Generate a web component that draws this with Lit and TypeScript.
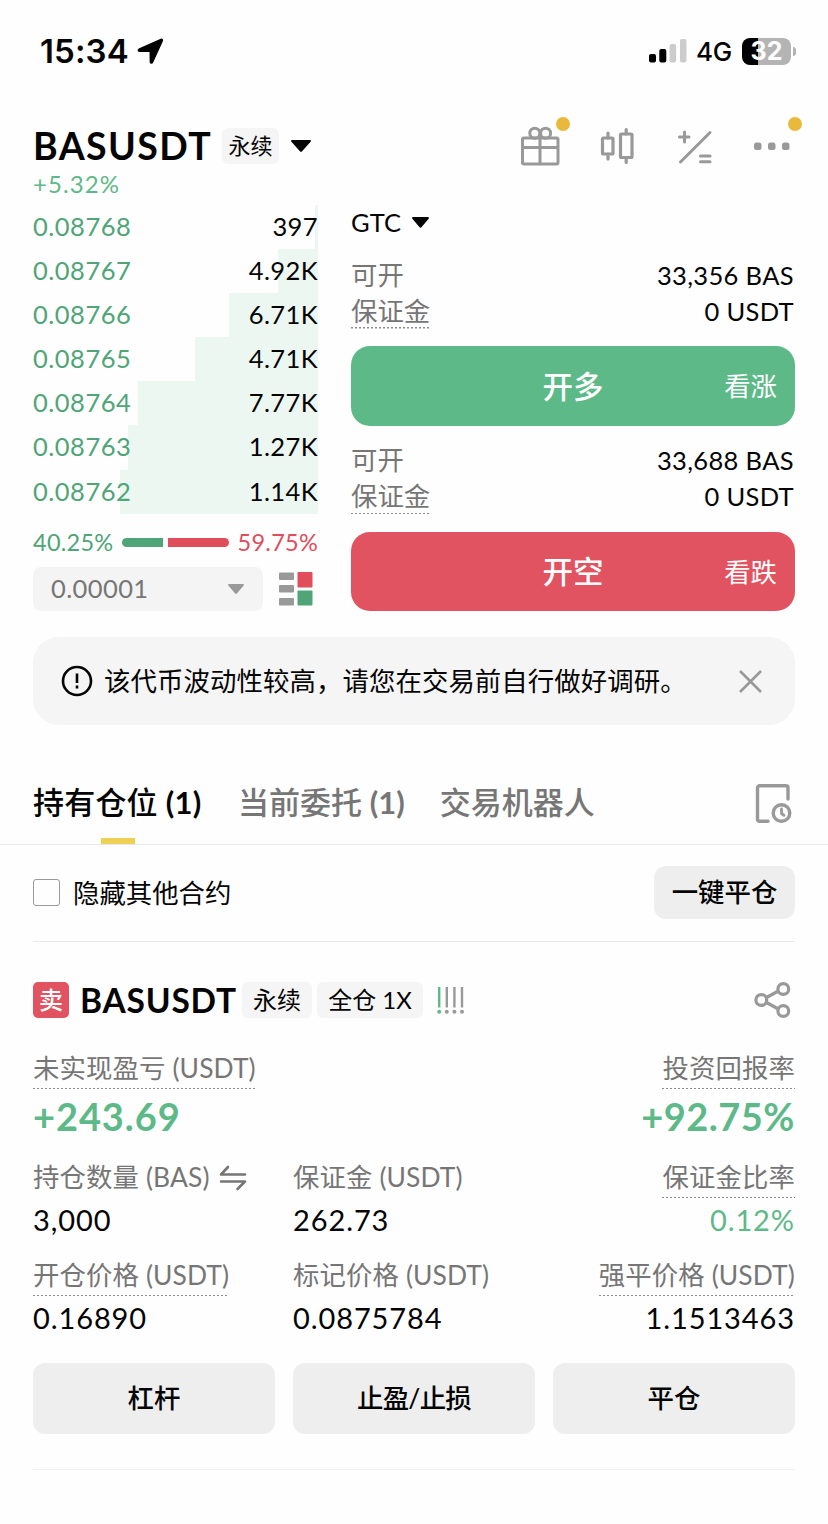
import { LitElement, html, css, svg } from "lit";
import { customElement } from "lit/decorators.js";

const BOOK = [
  { price: "0.08768", size: "397", depth: 3 },
  { price: "0.08767", size: "4.92K", depth: 40 },
  { price: "0.08766", size: "6.71K", depth: 89 },
  { price: "0.08765", size: "4.71K", depth: 123 },
  { price: "0.08764", size: "7.77K", depth: 180 },
  { price: "0.08763", size: "1.27K", depth: 190 },
  { price: "0.08762", size: "1.14K", depth: 198 },
];

const caret = (w: number, h: number, color: string) => html`
  <svg class="icon" width=${w} height=${h} viewBox="0 0 20 12" preserveAspectRatio="none">
    <path fill=${color} d="M1.2 0h17.6c1 0 1.5 1 .8 1.8l-8.5 9.5c-.6.7-1.6.7-2.2 0L.4 1.8C-.3 1 .2 0 1.2 0z" />
  </svg>`;

@customElement("app-root")
export class AppRoot extends LitElement {
  static styles = css`
    :host {
      display: block;
      width: 828px;
      height: 1524px;
      overflow: hidden;
      background: #fefefe;
      color: #050505;
      font-family: Lato, "Noto Sans CJK SC", sans-serif;
      font-size: 26.4px;
      white-space: nowrap;
    }
    * { box-sizing: border-box; }
    .icon { display: block; flex: none; }
    .row { display: flex; align-items: center; }
    .between { justify-content: space-between; }
    .end { text-align: right; }
    .gray { color: #767676; }
    .green { color: #5eb989; }

    .status { height: 102px; padding: 0 32px 0 40px; font-family: Inter, sans-serif; }
    .time { font-size: 33px; font-weight: 600; letter-spacing: 0.1px; width: 97px; }
    .status-right { display: flex; align-items: center; margin-left: auto; }
    .net { font-size: 26px; font-weight: 500; margin: 1px 0 0 9px; width: 46px; letter-spacing: -0.3px; }
    .battery { display: flex; align-items: center; }
    .cell {
      width: 49px; height: 27px; border-radius: 8px; line-height: 27px;
      background: linear-gradient(90deg, #000 16px, #b4b4b4 16px);
      color: #fff; font-size: 25px; font-weight: 700; text-align: center;
    }
    .nub { width: 3px; height: 9px; margin-left: 2px; border-radius: 0 4px 4px 0; background: #b4b4b4; }

    .header { height: 67px; padding: 20px 34px 0 33px; }
    .symbol { font-size: 37.5px; font-weight: 700; letter-spacing: 1.4px; line-height: 48px; width: 189px; }
    .tag {
      height: 36px; line-height: 35px; border-radius: 6px; background: #f5f5f5;
      text-align: center; font-size: 22px;
    }
    .tag.perp { width: 57px; margin-right: 12px; }
    .tools { display: flex; align-items: center; margin-left: auto; }
    .tool { position: relative; }
    .dot { position: absolute; width: 14px; height: 14px; border-radius: 50%; background: #e9b93c; }
    .gift-dot { left: 36px; top: -9px; }
    .more-dot { left: 35px; top: -21px; }
    .candles { margin-left: 39px; }
    .calc, .more { margin-left: 41px; }

    .trade { display: grid; grid-template-columns: 285px 444px; column-gap: 33px; padding: 0 33px; height: 442px; }
    .change { height: 36px; line-height: 29px; font-size: 24px; letter-spacing: 1.1px; }
    .level { position: relative; display: flex; justify-content: space-between; height: 44.1px; line-height: 42px; font-size: 25.5px; }
    .level span { position: relative; }
    .price { color: #4fa577; letter-spacing: 0.5px; }
    .size { letter-spacing: 0.4px; }
    .depth { position: absolute; right: 0; top: 0; bottom: 0; background: #edf7f2; }
    .ratio { height: 54px; line-height: 52px; padding-top: 3px; font-size: 23.5px; letter-spacing: 0.25px; }
    .ratio-bar { display: flex; gap: 5px; width: 107px; height: 9px; margin-top: 1px; }
    .buy { width: 41px; border-radius: 5px 0 0 5px; background: #4fa577; }
    .sell { flex: 1; border-radius: 0 5px 5px 0; background: #e04d5b; }
    .buy-text { color: #4fa577; }
    .sell-text { color: #e04d5b; }
    .step-row { height: 44px; margin-top: -1px; }
    .step { width: 230px; height: 44px; padding: 0 19px 0 18px; border-radius: 8px; background: #f4f4f4; color: #767676; font-size: 25.5px; letter-spacing: 0.4px; line-height: 42px; }
    .step span { margin-top: -2px; }

    .asset { height: 88px; padding-top: 18px; font-size: 25.5px; gap: 11px; letter-spacing: 0.1px; }
    .order { height: 185.5px; }
    .info { height: 36px; line-height: 35px; }
    .amount { font-size: 25.5px; letter-spacing: 0.35px; padding-right: 1px; }
    .under { background: repeating-linear-gradient(90deg, #8c8c8c 0 2px, transparent 2px 4px) left bottom / 100% 1.5px no-repeat; }
    .order .under { height: 35px; line-height: 34px; }
    .action {
      display: grid; grid-template-columns: 1fr auto 1fr; align-items: center;
      height: 79.5px; margin-top: 17px; padding: 0 18px 2px; border-radius: 19px; color: #fff;
    }
    .action b { grid-column: 2; font-size: 30.5px; font-weight: 500; }
    .action span { text-align: right; }
    .long { background: #5eb989; }
    .short { background: #e15361; }

    .alert { height: 88px; margin: 26px 33px 0; padding: 0 33px 0 28px; border-radius: 26px; background: #f5f5f5; }
    .alert-text { margin: -3px 0 0 11px; flex: 1; letter-spacing: 0.1px; }

    .tabs { height: 120px; padding: 37px 35px 0 33px; border-bottom: 1.5px solid #e9e9e9; font-size: 31px; font-weight: 500; align-items: flex-start; line-height: 81px; }
    .tab { position: relative; height: 82px; margin-right: 35px; color: #767676; }
    .tab b { font-weight: 700; }
    .tab.on { color: #050505; letter-spacing: 0.2px; width: 169px; margin-right: 36px; }
    .tab.on::after { content: ""; position: absolute; left: 68px; bottom: 0; width: 34px; height: 6px; background: #edd054; }
    .tabs .icon { margin: 21px 1px 0 auto; }

    .filter { height: 97px; margin: 0 33px; border-bottom: 1.5px solid #e9e9e9; }
    .filter-text { margin-top: -4px; }
    .check { width: 27px; height: 27px; border: 1.5px solid #9a9a9a; border-radius: 3px; margin: -2px 13px 0 0; }
    .close-all { margin: -1px 0 0 auto; width: 141px; height: 53px; line-height: 53px; border-radius: 12px; background: #eee; text-align: center; font-weight: 500; }

    .position { padding: 0 33px; }
    .pos-head { height: 117px; padding-bottom: 1px; }
    .side { width: 36px; height: 36px; line-height: 35px; border-radius: 5px; background: #e15361; color: #fff; font-size: 24px; font-weight: 500; text-align: center; margin-right: 11px; }
    .pos-symbol { width: 162px; font-size: 33.5px; font-weight: 700; letter-spacing: 0.8px; }
    .pos-head .tag { font-size: 24px; margin-right: 5px; }
    .w70 { width: 70px; }
    .w106 { width: 106px; }
    .marks { margin-left: 9px; }
    .share { margin-left: auto; margin-right: 4px; }
    .label { display: inline-block; height: 41px; line-height: 40px; color: #767676; letter-spacing: 0.12px; vertical-align: top; }
    .pnl { display: flex; justify-content: space-between; height: 101px; margin-top: -11px; }
    .big { font-size: 38px; font-weight: 700; line-height: 54px; color: #5eb989; letter-spacing: 0.9px; }
    .end .big { letter-spacing: 0.5px; }
    .grid { display: grid; grid-template-columns: 260px 246px 256px; grid-auto-rows: 98px; padding-top: 8px; }
    .value { font-size: 29px; line-height: 43px; letter-spacing: 0.9px; }
    .swap { display: inline-block; vertical-align: -4px; margin-left: 3px; }
    .buttons { display: grid; grid-template-columns: repeat(3, 1fr); gap: 18px; margin-top: 10px; }
    .btn { height: 71px; line-height: 70px; border-radius: 12px; background: #eee; text-align: center; font-weight: 500; }
    .tight { letter-spacing: -0.7px; }
    .foot { height: 36px; border-bottom: 1.5px solid #f0f0f0; }
  `;

  private order(amount: string, kind: string, title: string, hint: string) {
    return html`
      <div class="order">
        <div class="row between info"><span class="gray">可开</span><span class="amount">${amount}</span></div>
        <div class="row between info"><span class="gray under">保证金</span><span class="amount">0 USDT</span></div>
        <div class="action ${kind}"><b>${title}</b><span>${hint}</span></div>
      </div>`;
  }

  private cell(label: unknown, value: string, cls = "", under = false, color = "") {
    return html`
      <div class=${cls}>
        <div><span class="label ${under ? "under" : ""}">${label}</span></div>
        <div class="value ${color}">${value}</div>
      </div>`;
  }

  render() {
    return html`
      <div class="row status">
        <span class="time">15:34</span>
        <svg class="icon" width="27" height="27" viewBox="0 0 27 27">
          <path stroke="#000" stroke-width="1.500" stroke-linejoin="round" d="M24 1.500 2 11.300c-1.100.6-.7 1.900.5 1.900l10 .1c.5 0 .8.3.8.8l.1 9.800c0 1.300 1.500 1.600 2 .5L25.300 2.800c.4-1-.4-1.700-1.300-1.300z" />
        </svg>
        <div class="status-right">
          <svg class="icon" width="38" height="24" viewBox="0 0 38 24">
            <rect x="0" y="15" width="7" height="8.5" rx="2" /><rect x="10.3" y="10" width="7" height="13.5" rx="2" />
            <rect x="20.6" y="5" width="6.5" height="18.5" rx="2" fill="#ccc" /><rect x="31" y="0" width="6.5" height="23.5" rx="2" fill="#ccc" />
          </svg>
          <span class="net">4G</span>
          <div class="battery"><div class="cell">32</div><div class="nub"></div></div>
        </div>
      </div>

      <div class="row header">
        <span class="symbol">BASUSDT</span>
        <span class="tag perp">永续</span>
        ${caret(20, 12, "#050505")}
        <div class="tools">
          <div class="tool">
            <svg class="icon" width="40" height="40" viewBox="0 0 40 40" fill="none" stroke="#999" stroke-width="3">
              <rect x="2.5" y="12" width="35.5" height="26" rx="1.5" /><path d="M2.5 21.5H38M20 12v26" />
              <circle cx="14.8" cy="7.2" r="5" /><circle cx="25.6" cy="7.2" r="5" /><path d="M20 8v5" />
            </svg>
            <i class="dot gift-dot"></i>
          </div>
          <svg class="icon candles" width="36" height="38" viewBox="0 0 36 38" fill="none" stroke="#999" stroke-width="3.2" stroke-linecap="round">
            <rect x="3.5" y="11" width="10.5" height="16" rx="1" /><path d="M9 6v5M9 27v5" />
            <rect x="21.5" y="7" width="11.5" height="23.5" rx="1" /><path d="M27.2 2.5V7M27.2 30.5V35.5" />
          </svg>
          <svg class="icon calc" width="36" height="38" viewBox="0 0 36 38" fill="none" stroke="#999" stroke-width="3" stroke-linecap="round">
            <path d="M4.5 35 34 5.5M3.5 10H13M8.5 5v10M24.5 29H34M24.5 34.8H34" />
          </svg>
          <div class="tool more">
            <svg class="icon" width="41" height="16" viewBox="0 0 41 16" fill="#999">
              <rect x="1" y="4.5" width="7.5" height="7.5" rx="2.5" /><rect x="15" y="4.5" width="7.5" height="7.5" rx="2.5" /><rect x="29" y="4.5" width="7.5" height="7.5" rx="2.5" />
            </svg>
            <i class="dot more-dot"></i>
          </div>
        </div>
      </div>

      <div class="trade">
        <div>
          <div class="change green">+5.32%</div>
          ${BOOK.map((l) => html`
            <div class="level"><i class="depth" style="width:${l.depth}px"></i><span class="price">${l.price}</span><span class="size">${l.size}</span></div>`)}
          <div class="row between ratio">
            <span class="buy-text">40.25%</span>
            <div class="ratio-bar"><i class="buy"></i><i class="sell"></i></div>
            <span class="sell-text">59.75%</span>
          </div>
          <div class="row between step-row">
            <div class="row between step"><span>0.00001</span>${caret(16, 10, "#999")}</div>
            <svg class="icon" width="39" height="34" viewBox="0 0 39 34">
              <g fill="#999"><rect x="0" y="0.5" width="15" height="7.5" rx="1" /><rect x="0" y="13" width="15" height="7.5" rx="1" /><rect x="0" y="26" width="15" height="7.5" rx="1" /></g>
              <rect x="18.5" y="0" width="15" height="15.5" rx="1" fill="#e04d5b" /><rect x="18.5" y="18.5" width="15" height="15" rx="1" fill="#4fa577" />
            </svg>
          </div>
        </div>
        <div>
          <div class="row asset"><span>GTC</span>${caret(17, 11, "#050505")}</div>
          ${this.order("33,356 BAS", "long", "开多", "看涨")}
          ${this.order("33,688 BAS", "short", "开空", "看跌")}
        </div>
      </div>

      <div class="row alert">
        <svg class="icon" width="32" height="32" viewBox="0 0 32 32" fill="none" stroke="#050505" stroke-width="2.6">
          <circle cx="16" cy="16" r="14" /><path d="M16 8.5v9.5M16 20.5v3" />
        </svg>
        <span class="alert-text">该代币波动性较高，请您在交易前自行做好调研。</span>
        <svg class="icon" width="23" height="23" viewBox="0 0 23 23" fill="none" stroke="#999" stroke-width="2.6"><path d="M1 1l21 21M22 1 1 22" /></svg>
      </div>

      <div class="row tabs">
        <span class="tab on">持有仓位 <b>(1)</b></span>
        <span class="tab">当前委托 <b>(1)</b></span>
        <span class="tab">交易机器人</span>
        <svg class="icon" width="37" height="41" viewBox="0 0 37 41" fill="none" stroke="#999" stroke-width="3.4" stroke-linecap="round">
          <path d="M13 38.3H4.500a2 2 0 0 1-2-2V4.800a2 2 0 0 1 2-2h26.500a2 2 0 0 1 2 2V16" />
          <circle cx="26.5" cy="30" r="8.3" /><path d="M26.5 26v4.500l2.500 1.800" stroke-width="2.8" />
        </svg>
      </div>

      <div class="row filter"><i class="check"></i><span class="filter-text">隐藏其他合约</span><span class="close-all">一键平仓</span></div>

      <div class="position">
        <div class="row pos-head">
          <span class="side">卖</span><span class="pos-symbol">BASUSDT</span>
          <span class="tag w70">永续</span><span class="tag w106">全仓 1X</span>
          <svg class="icon marks" width="28" height="27" viewBox="0 0 28 27">
            ${[0, 1, 2, 3].map((i) => svg`<g fill=${i ? "#999" : "#5eb989"}><rect x=${1 + i * 7.6} y="0" width="2.4" height="20.5" /><circle cx=${2.2 + i * 7.6} cy="24.800" r="2" /></g>`)}
          </svg>
          <svg class="icon share" width="37" height="36" viewBox="0 0 37 36" fill="none" stroke="#999" stroke-width="3.2">
            <path d="M12.5 15.5 23.5 9.5M12.5 20.5 23.5 26.5" />
            <circle cx="7.3" cy="18" r="5.4" /><circle cx="29.3" cy="7" r="5.4" /><circle cx="29.3" cy="29" r="5.4" />
          </svg>
        </div>
        <div class="pnl">
          <div><div><span class="label under">未实现盈亏 (USDT)</span></div><div class="big">+243.69</div></div>
          <div class="end"><div><span class="label under">投资回报率</span></div><div class="big">+92.75%</div></div>
        </div>
        <div class="grid">
          ${this.cell(html`持仓数量 (BAS) <svg class="swap" width="28" height="26" viewBox="0 0 28 26" fill="none" stroke="#767676" stroke-width="2.6" stroke-linejoin="round" stroke-linecap="round"><path d="M9 2 2 9.5H26M2 16.5H26L18.5 24" /></svg>`, "3,000")}
          ${this.cell("保证金 (USDT)", "262.73")}
          ${this.cell("保证金比率", "0.12%", "end", true, "green")}
          ${this.cell("开仓价格 (USDT)", "0.16890", "", true)}
          ${this.cell("标记价格 (USDT)", "0.0875784")}
          ${this.cell("强平价格 (USDT)", "1.1513463", "end", true)}
        </div>
        <div class="buttons"><span class="btn">杠杆</span><span class="btn tight">止盈/止损</span><span class="btn">平仓</span></div>
        <div class="foot"></div>
      </div>
    `;
  }
}
